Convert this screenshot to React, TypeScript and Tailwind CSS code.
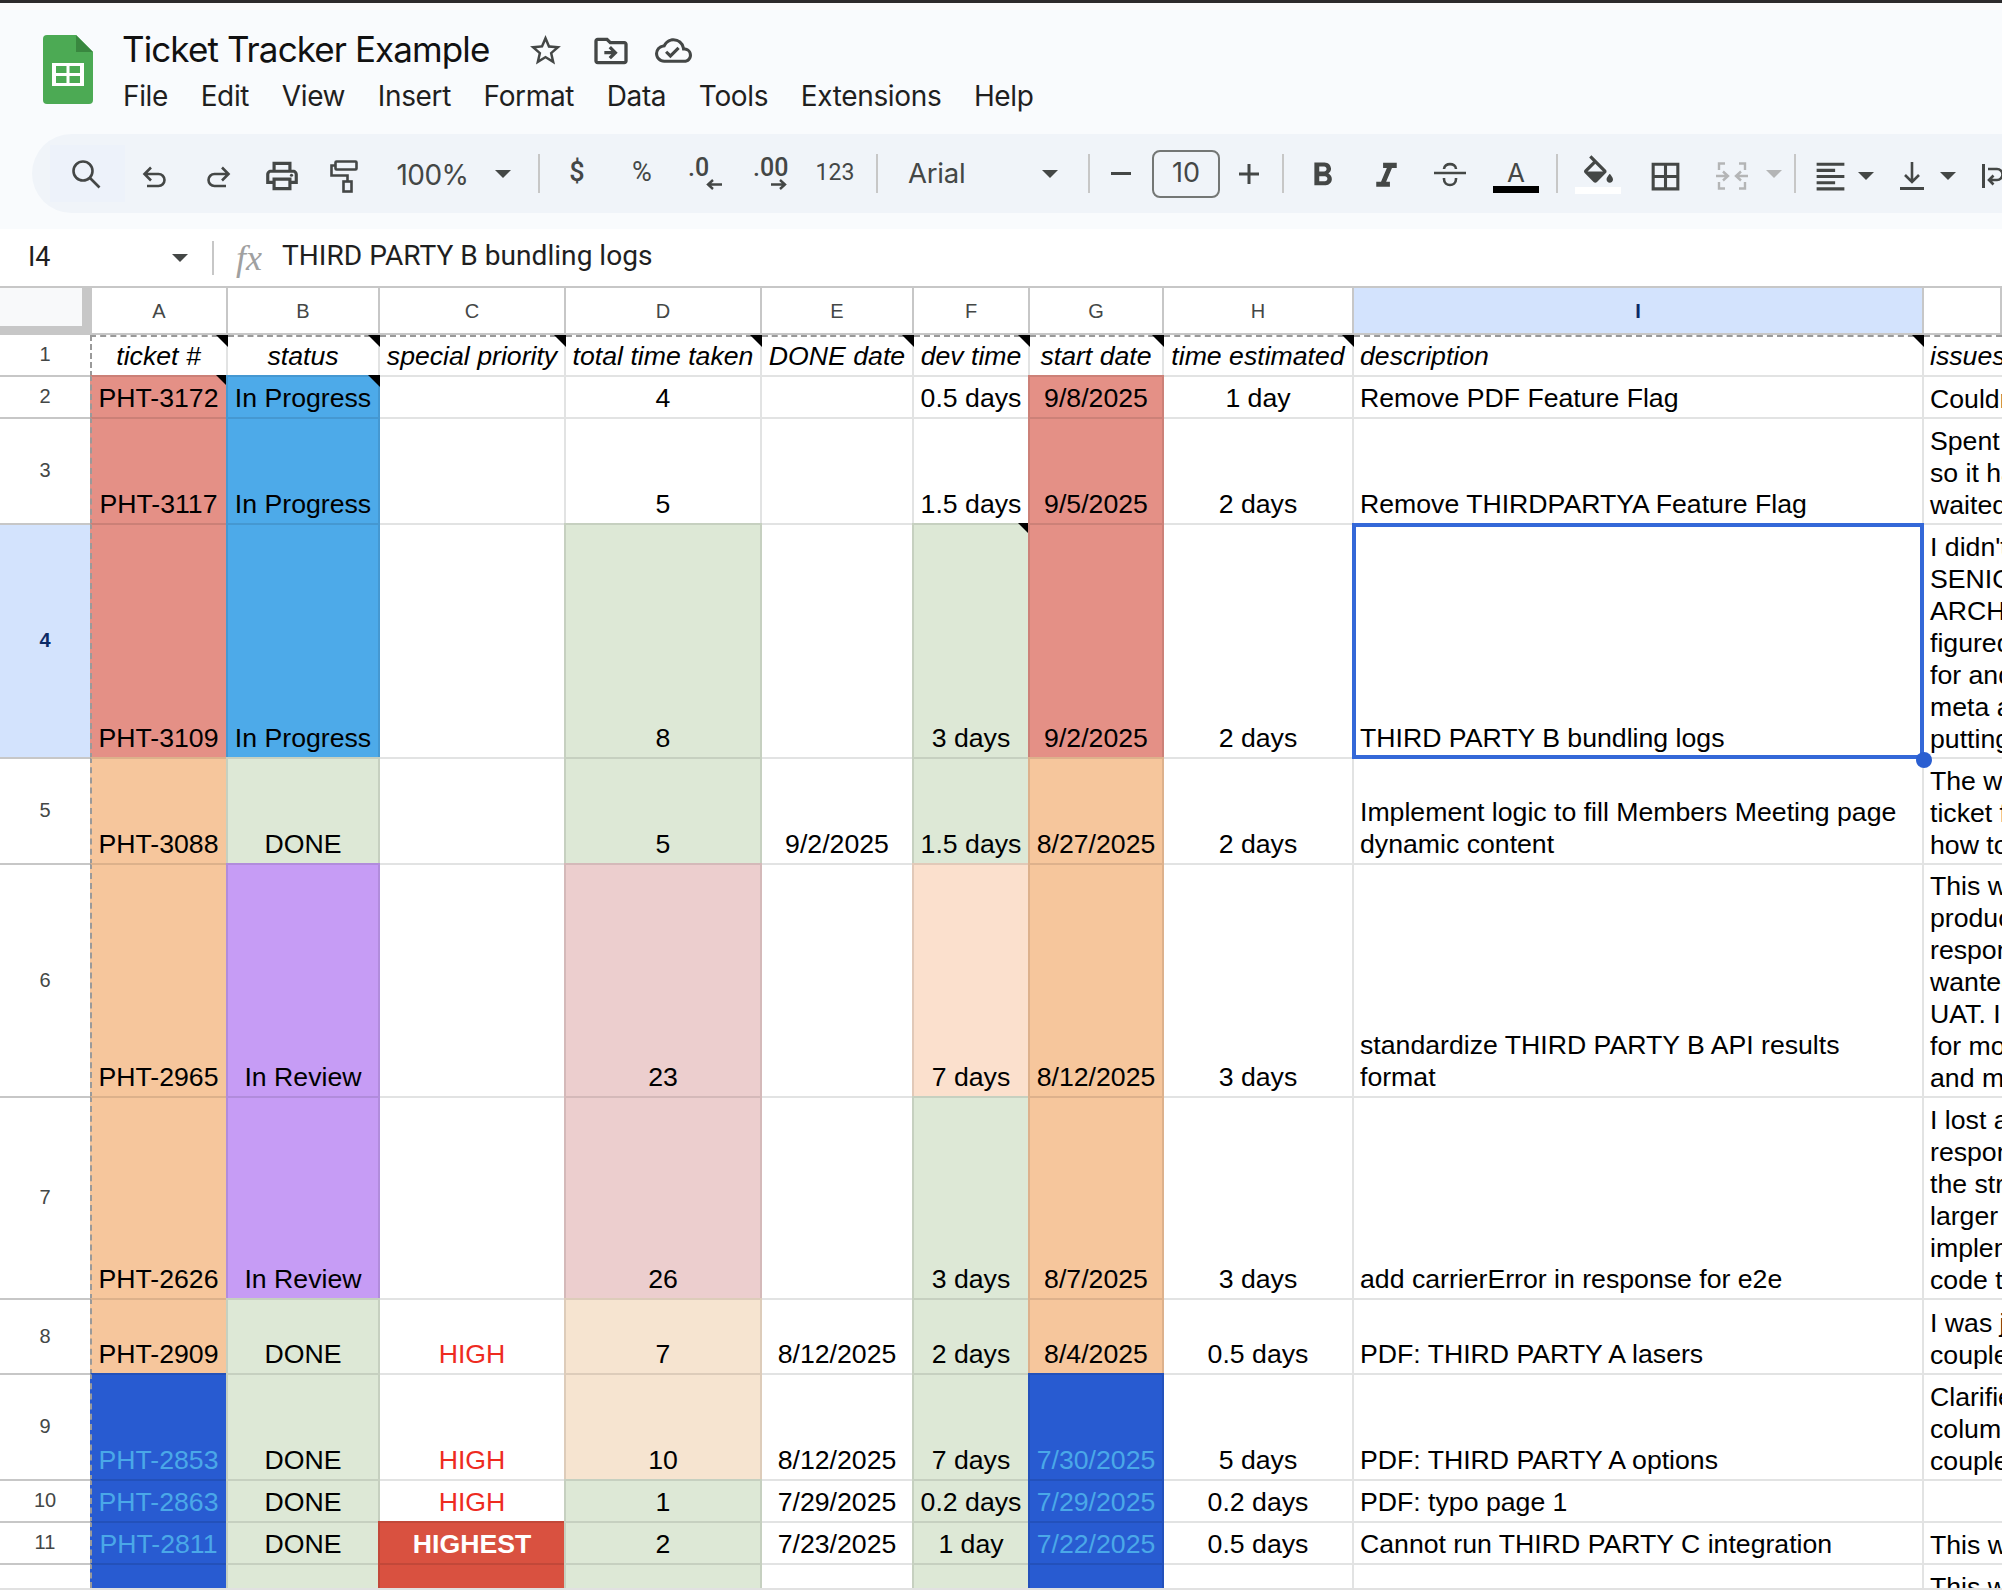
import React from "react";
import { MdStarBorder, MdOutlineDriveFileMove, MdOutlineCloudDone, MdOutlineLocalPrintshop, MdFormatBold, MdFormatItalic, MdBorderAll, MdFormatAlignLeft } from "react-icons/md";

const Sep = () => <div className="w-[2px] h-[39px] bg-[#c7c7c7] shrink-0" />;
const Tri = ({ gray }: { gray?: boolean }) => (
  <svg width="16" height="8" viewBox="0 0 16 8" className={gray ? "text-[#b4b5b6]" : "text-[#444746]"}>
    <path d="M0 0H16L8 8Z" fill="currentColor" />
  </svg>
);
const Slot = ({ w, children }: { w: string; children?: React.ReactNode }) => (
  <div className={`${w} shrink-0 flex items-center justify-center`}>{children}</div>
);

const Undo = ({ flip }: { flip?: boolean }) => (
  <svg width="25" height="22" viewBox="0 0 25 22" fill="none" stroke="#444746" strokeWidth="2.6" className={flip ? "-scale-x-100 mt-[6px]" : "mt-[6px]"}>
    <path d="M9 1.5L2.5 8L9 14.5M2.5 8H16.5A6 6 0 0 1 16.5 20H5" />
  </svg>
);

function Toolbar() {
  return (
    <div className="ml-[32px] mt-[10px] h-[79px] rounded-l-[40px] bg-[#f0f4f9] flex items-center pl-[18px] overflow-hidden text-[#444746] font-['Roboto',sans-serif]">
      <div className="w-[75px] h-[57px] shrink-0 bg-[#edf2fa] flex items-center justify-center pr-[4px]">
        <svg width="32" height="32" viewBox="0 0 32 32" fill="none" stroke="#444746" strokeWidth="2.6">
          <circle cx="13" cy="13" r="9.5" />
          <path d="M20 20L29.5 29.5" />
        </svg>
      </div>
      <Slot w="w-[58px]"><Undo /></Slot>
      <Slot w="w-[70px]"><Undo flip /></Slot>
      <Slot w="w-[58px]"><MdOutlineLocalPrintshop size={38} className="mt-[5px]" /></Slot>
      <Slot w="w-[66px]">
        <svg width="28" height="33" viewBox="0 0 28 33" fill="none" stroke="#444746" strokeWidth="2.6" className="mt-[6px]">
          <rect x="5.5" y="1.5" width="21" height="8" rx="1" />
          <path d="M5 5.5H1.5V15.5H17.5V21" />
          <rect x="13.5" y="21.5" width="8" height="10" />
        </svg>
      </Slot>
      <Slot w="w-[111px]"><span className="text-[28px] font-['Inter',sans-serif] tracking-[-0.5px] mt-[3px]">100%</span></Slot>
      <Slot w="w-[30px]"><Tri /></Slot>
      <div className="w-[20px] shrink-0" />
      <Sep />
      <Slot w="w-[74px]"><span className="text-[27px] font-medium -mt-[2px]">$</span></Slot>
      <Slot w="w-[56px]"><span className="text-[27px] -mt-[2px]">%</span></Slot>
      <Slot w="w-[70px]">
        <div className="flex flex-col items-end w-[34px] font-medium">
          <span className="text-[25px] leading-[20px] self-start">.0</span>
          <svg width="16" height="11" viewBox="0 0 16 11" fill="none" stroke="#444746" strokeWidth="2.4" className="mt-[1px]"><path d="M16 5.5H2M7 1L2 5.5L7 10" /></svg>
        </div>
      </Slot>
      <Slot w="w-[60px]">
        <div className="flex flex-col items-end w-[34px] font-medium">
          <span className="text-[25px] leading-[20px] self-start">.00</span>
          <svg width="16" height="11" viewBox="0 0 16 11" fill="none" stroke="#444746" strokeWidth="2.4" className="mt-[1px]"><path d="M0 5.5H14M9 1L14 5.5L9 10" /></svg>
        </div>
      </Slot>
      <Slot w="w-[70px]"><span className="text-[23px]">123</span></Slot>
      <div className="w-[6px] shrink-0" />
      <Sep />
      <div className="w-[162px] shrink-0 pl-[30px] text-[27.5px] font-['Inter',sans-serif] tracking-[-0.2px]">Arial</div>
      <Slot w="w-[20px]"><Tri /></Slot>
      <div className="w-[28px] shrink-0" />
      <Sep />
      <Slot w="w-[62px]"><div className="w-[20px] h-[3px] bg-[#444746]" /></Slot>
      <div className="w-[68px] h-[48px] shrink-0 border-2 border-[#747775] rounded-[8px] flex items-center justify-center text-[27px] font-['Inter',sans-serif]">10</div>
      <Slot w="w-[58px]">
        <svg width="20" height="20" viewBox="0 0 20 20" stroke="#444746" strokeWidth="3"><path d="M0 10H20M10 0V20" /></svg>
      </Slot>
      <div className="w-[4px] shrink-0" />
      <Sep />
      <Slot w="w-[76px]"><MdFormatBold size={39} className="mt-[4px]" /></Slot>
      <Slot w="w-[52px]"><MdFormatItalic size={41} className="mt-[5px]" /></Slot>
      <Slot w="w-[76px]">
        <svg width="32" height="26" viewBox="0 0 32 26" fill="none" stroke="#444746" strokeWidth="2.6" className="mt-[2px]">
          <path d="M0 11H32M10 7C10 0.5 22 0.5 22 7M10 16V17C10 25 22 25 22 17V16" />
        </svg>
      </Slot>
      <div className="w-[56px] shrink-0 flex flex-col items-center mt-[7px]">
        <span className="text-[26px] leading-[24px] font-['Inter',sans-serif]">A</span>
        <div className="w-[46px] h-[7px] bg-black mt-[1px]" />
      </div>
      <div className="w-[12px] shrink-0" />
      <Sep />
      <div className="w-[80px] shrink-0 flex flex-col items-center mt-[1px]">
        <svg width="29" height="28" viewBox="3 0 18 17" fill="#444746">
          <path d="M16.56 8.94L7.62 0 6.21 1.41l2.38 2.38-5.15 5.15c-.59.59-.59 1.54 0 2.12l5.5 5.5c.29.29.68.44 1.06.44s.77-.15 1.06-.44l5.5-5.5c.59-.58.59-1.53 0-2.12zM5.21 10L10 5.21 14.79 10H5.21zM19 11.5s-2 2.17-2 3.5c0 1.1.9 2 2 2s2-.9 2-2c0-1.33-2-3.5-2-3.5z" />
        </svg>
        <div className="w-[46px] h-[7px] bg-white mt-[4px]" />
      </div>
      <Slot w="w-[54px]"><MdBorderAll size={37} className="mt-[5px]" /></Slot>
      <div className="w-[8px] shrink-0" />
      <Slot w="w-[64px]">
        <svg width="32" height="28" viewBox="0 0 32 28" fill="none" stroke="#b4b5b6" strokeWidth="2.4" className="mt-[5px]">
          <path d="M3 8V1.5H9M3 20V26.5H9M29 8V1.5H23M29 20V26.5H23M0 14H11M7 9.5L12 14L7 18.5M32 14H21M25 9.5L20 14L25 18.5" />
        </svg>
      </Slot>
      <Slot w="w-[20px]"><Tri gray /></Slot>
      <div className="w-[10px] shrink-0" />
      <Sep />
      <div className="w-[8px] shrink-0" />
      <Slot w="w-[52px]"><MdFormatAlignLeft size={37} className="mt-[5px]" /></Slot>
      <Slot w="w-[20px]"><div className="mt-[5px]"><Tri /></div></Slot>
      <div className="w-[10px] shrink-0" />
      <Slot w="w-[52px]">
        <svg width="24" height="28" viewBox="0 0 24 28" fill="none" stroke="#444746" strokeWidth="2.6" className="mt-[5px]">
          <path d="M12 0V20M5 13L12 20L19 13" />
          <path d="M0 26.5H24" strokeWidth="3" />
        </svg>
      </Slot>
      <Slot w="w-[20px]"><div className="mt-[5px]"><Tri /></div></Slot>
      <div className="w-[24px] shrink-0" />
      <svg width="20" height="24" viewBox="0 0 20 24" fill="none" stroke="#444746" strokeWidth="2.6" className="shrink-0 mt-[4px]">
        <path d="M1.5 0V24" strokeWidth="3" />
        <path d="M6 5H15A5.5 5.5 0 0 1 15 16H7M11.5 11.5L7 16L11.5 20.5" />
      </svg>
    </div>
  );
}

const MENU = ["File", "Edit", "View", "Insert", "Format", "Data", "Tools", "Extensions", "Help"];

function Header() {
  return (
    <div className="h-[226px] bg-[#f9fbfd] shrink-0 font-['Roboto',sans-serif]">
      <div className="flex h-[121px] pt-[32px] pl-[43px]">
        <svg width="50" height="69" viewBox="0 0 50 69" className="shrink-0">
          <path d="M4 0H33L50 17V65A4 4 0 0 1 46 69H4A4 4 0 0 1 0 65V4A4 4 0 0 1 4 0Z" fill="#4caa54" />
          <path d="M33 0L50 17H33Z" fill="#39873f" />
          <path d="M9 28H41V51H9Z M13 31V38H23.5V31Z M26.5 31V38H37V31Z M13 41V48H23.5V41Z M26.5 41V48H37V41Z" fill="#fff" fillRule="evenodd" />
        </svg>
        <div className="ml-[29px] -mt-[7px]">
          <div className="flex items-center h-[42px]">
            <span className="text-[35px] text-[#111] font-['Inter',sans-serif] tracking-[-0.9px] leading-[42px]">Ticket Tracker Example</span>
            <div className="flex items-center ml-[38px] mt-[3px] text-[#444746]">
              <MdStarBorder size={37} />
              <MdOutlineDriveFileMove size={40} className="ml-[27px]" />
              <MdOutlineCloudDone size={37} className="ml-[24px]" />
            </div>
          </div>
          <div className="flex gap-[32.6px] ml-[1px] mt-[9px] text-[28px] leading-[34px] text-[#1f1f1f] font-['Inter',sans-serif] tracking-[-0.35px]">
            {MENU.map((m) => <span key={m}>{m}</span>)}
          </div>
        </div>
      </div>
      <Toolbar />
    </div>
  );
}

function FormulaBar() {
  return (
    <div className="h-[57px] bg-white shrink-0 flex items-center text-[#1f1f1f] font-['Roboto',sans-serif]">
      <div className="w-[212px] shrink-0 flex items-center pl-[28px] pr-[24px] justify-between text-[27px]">
        <span>I4</span>
        <Tri />
      </div>
      <div className="w-[2px] h-[34px] bg-[#c7c7c7] shrink-0" />
      <span className="ml-[22px] w-[46px] shrink-0 font-['Liberation_Serif',serif] italic text-[36px] leading-[40px] text-[#a0a0a0]">fx</span>
      <span className="text-[28.1px] -mt-[2px]">THIRD PARTY B bundling logs</span>
    </div>
  );
}

const RED = "bg-[#e49086]";
const BLUE = "bg-[#4daae9]";
const PEACH = "bg-[#f6c69c]";
const GREEN = "bg-[#dde8d6]";
const PURPLE = "bg-[#c69cf5]";
const PINK = "bg-[#eccece]";
const LPEACH = "bg-[#fbe0cd]";
const TAN = "bg-[#f6e4d0]";
const DARK = "bg-[#285bd1]";
const CRIT = "bg-[#d95140]";
const LINK = "text-[#4aa8e8]";

type R = {
  h: string; hh?: boolean;
  a: string; ac: string; b: string; bc: string; c?: string; d?: string; dc?: string; e?: string;
  f?: string; fc?: string; g?: string; gc: string; eh?: string; i?: string; j?: string[]; note?: boolean; fnote?: boolean;
};

const ROWS: R[] = [
  { h: "2", a: "PHT-3172", ac: RED, b: "In Progress", bc: BLUE, d: "4", f: "0.5 days", g: "9/8/2025", gc: RED, eh: "1 day", i: "Remove PDF Feature Flag", j: ["Couldn't"], note: true },
  { h: "3", a: "PHT-3117", ac: RED, b: "In Progress", bc: BLUE, d: "5", f: "1.5 days", g: "9/5/2025", gc: RED, eh: "2 days", i: "Remove THIRDPARTYA Feature Flag", j: ["Spent", "so it has", "waited"] },
  { h: "4", hh: true, a: "PHT-3109", ac: RED, b: "In Progress", bc: BLUE, d: "8", dc: GREEN, f: "3 days", fc: GREEN, g: "9/2/2025", gc: RED, eh: "2 days", i: "THIRD PARTY B bundling logs", j: ["I didn't", "SENIOR", "ARCHITECT", "figured", "for and", "meta and", "putting"], fnote: true },
  { h: "5", a: "PHT-3088", ac: PEACH, b: "DONE", bc: GREEN, d: "5", dc: GREEN, e: "9/2/2025", f: "1.5 days", fc: GREEN, g: "8/27/2025", gc: PEACH, eh: "2 days", i: "Implement logic to fill Members Meeting page dynamic content", j: ["The work", "ticket for", "how to"] },
  { h: "6", a: "PHT-2965", ac: PEACH, b: "In Review", bc: PURPLE, d: "23", dc: PINK, f: "7 days", fc: LPEACH, g: "8/12/2025", gc: PEACH, eh: "3 days", i: "standardize THIRD PARTY B API results format", j: ["This was", "product", "response", "wanted", "UAT. I", "for more", "and more"] },
  { h: "7", a: "PHT-2626", ac: PEACH, b: "In Review", bc: PURPLE, d: "26", dc: PINK, f: "3 days", fc: GREEN, g: "8/7/2025", gc: PEACH, eh: "3 days", i: "add carrierError in response for e2e", j: ["I lost a", "response", "the struct", "larger", "implement", "code to"] },
  { h: "8", a: "PHT-2909", ac: PEACH, b: "DONE", bc: GREEN, c: "HIGH", d: "7", dc: TAN, e: "8/12/2025", f: "2 days", fc: GREEN, g: "8/4/2025", gc: PEACH, eh: "0.5 days", i: "PDF: THIRD PARTY A lasers", j: ["I was just", "couple"] },
  { h: "9", a: "PHT-2853", ac: DARK, b: "DONE", bc: GREEN, c: "HIGH", d: "10", dc: TAN, e: "8/12/2025", f: "7 days", fc: GREEN, g: "7/30/2025", gc: DARK, eh: "5 days", i: "PDF: THIRD PARTY A options", j: ["Clarified", "column", "couple"] },
  { h: "10", a: "PHT-2863", ac: DARK, b: "DONE", bc: GREEN, c: "HIGH", d: "1", dc: GREEN, e: "7/29/2025", f: "0.2 days", fc: GREEN, g: "7/29/2025", gc: DARK, eh: "0.2 days", i: "PDF: typo page 1" },
  { h: "11", a: "PHT-2811", ac: DARK, b: "DONE", bc: GREEN, c: "HIGHEST", d: "2", dc: GREEN, e: "7/23/2025", f: "1 day", fc: GREEN, g: "7/22/2025", gc: DARK, eh: "0.5 days", i: "Cannot run THIRD PARTY C integration", j: ["This was"] },
  { h: "", a: "", ac: DARK, b: "", bc: GREEN, c: "CRIT", d: "", dc: GREEN, f: "", fc: GREEN, g: "", gc: DARK, eh: "", i: "", j: ["This was"] },
];

const Note = () => <div className="absolute -top-[2px] -right-[2px] w-[12px] h-[12px] bg-black [clip-path:polygon(0_0,100%_0,100%_100%)]" />;

function Cell({ bg, text, note, left, extra, children }: { bg?: string; text?: string; note?: boolean; left?: boolean; extra?: string; children?: React.ReactNode }) {
  const skin = bg
    ? `${bg} -ml-[2px] -mt-[2px] border-l-2 border-t-2 border-r-2 border-b-2 border-black/10`
    : "bg-white border-r-2 border-b-2 border-[#e2e3e3]";
  return (
    <div className={`relative flex items-end pb-[3px] ${left ? "justify-start pl-[6px]" : "justify-center text-center"} ${skin} ${text ?? "text-black"} ${extra ?? ""}`}>
      {note && <Note />}
      <div>{children}</div>
    </div>
  );
}

const DASH_A = "border-l-[#9a9a9a] [border-left-style:dashed] pr-[1px]";

const HEAD = ["A", "B", "C", "D", "E", "F", "G", "H", "I"];
const TITLES = ["ticket #", "status", "special priority", "total time taken", "DONE date", "dev time", "start date", "time estimated"];

function Sheet() {
  return (
    <div className="h-[1302px] shrink-0 overflow-hidden border-t-2 border-[#c7c7c7] bg-white font-['Liberation_Sans',Arial,sans-serif] text-[26.67px] leading-[32px]">
      <div className="grid grid-cols-[92px_136px_152px_186px_196px_152px_116px_134px_190px_570px_78px] grid-rows-[47px_42px_42px_106px_234px_106px_233px_202px_75px_106px_42px_42px_42px]">
        <div className="bg-[#f8f9fa] border-r-[10px] border-b-[9px] border-[#c7c7c7]" />
        {HEAD.map((c) => (
          <div key={c} className={`flex items-center justify-center text-[20px] leading-none border-r-2 border-b-2 border-[#c7c7c7] ${c === "I" ? "bg-[#d3e3fd] text-[#0b2a66] font-bold" : "bg-white text-[#444746]"}`}>{c}</div>
        ))}
        <div className="bg-white border-r-2 border-b-2 border-[#c7c7c7]" />

        <div className="bg-white border-b-2 border-[#c7c7c7] flex items-center justify-center pr-[2px] pb-[2px] text-[20px] leading-none text-[#444746]">1</div>
        {TITLES.map((t, i) => (
          <div key={t} className={`relative flex items-end justify-center pb-[3px] italic whitespace-nowrap text-black bg-white border-r-2 border-b-2 border-t-2 border-[#e2e3e3] border-t-[#9a9a9a] [border-top-style:dashed] ${i === 0 ? `-ml-[2px] border-l-2 ${DASH_A}` : ""}`}>
            <Note />
            <span>{t}</span>
          </div>
        ))}
        <div className="relative flex items-end pb-[3px] pl-[6px] italic text-black bg-white border-r-2 border-b-2 border-t-2 border-[#e2e3e3] border-t-[#9a9a9a] [border-top-style:dashed]">
          <Note />
          <span>description</span>
        </div>
        <div className="flex items-end pb-[3px] pl-[6px] italic text-black bg-white border-b-2 border-t-2 border-[#e2e3e3] border-t-[#9a9a9a] [border-top-style:dashed] overflow-hidden whitespace-nowrap">
          <span>issues faced</span>
        </div>

        {ROWS.map((r, idx) => (
          <React.Fragment key={idx}>
            <div className={`border-b-2 border-[#c7c7c7] flex items-center justify-center pr-[2px] pb-[2px] text-[20px] leading-none ${r.hh ? "bg-[#d3e3fd] text-[#0b2a66] font-bold" : "bg-white text-[#444746]"}`}>{r.h}</div>
            <Cell bg={r.ac} text={r.ac === DARK ? LINK : undefined} note={r.note} extra={DASH_A}>{r.a}</Cell>
            <Cell bg={r.bc} note={r.note}>{r.b}</Cell>
            {r.c === "HIGHEST" || r.c === "CRIT" ? (
              <Cell bg={CRIT} text="text-white font-bold">{r.c === "HIGHEST" ? r.c : ""}</Cell>
            ) : (
              <Cell text="text-[#ee2b1f]">{r.c}</Cell>
            )}
            <Cell bg={r.dc}>{r.d}</Cell>
            <Cell>{r.e}</Cell>
            <Cell bg={r.fc} note={r.fnote}><span className="whitespace-nowrap">{r.f}</span></Cell>
            <Cell bg={r.gc} text={r.gc === DARK ? LINK : undefined}><span className="whitespace-nowrap">{r.g}</span></Cell>
            <Cell>{r.eh}</Cell>
            {r.h === "4" ? (
              <div className="relative -ml-[2px] -mt-[2px] border-[4px] border-[#3468d8] bg-white z-10 flex items-end pl-[4px] pb-[1px] text-black">
                <div>{r.i}</div>
                <div className="absolute -right-[12px] -bottom-[13px] w-[16px] h-[16px] rounded-full bg-[#2b5fd1]" />
              </div>
            ) : (
              <Cell left>{r.i}</Cell>
            )}
            <div className="flex flex-col justify-end pb-[2px] pl-[6px] border-b-2 border-[#e2e3e3] overflow-hidden whitespace-nowrap text-black bg-white">
              {(r.j ?? []).map((l, i) => <div key={i}>{l}</div>)}
            </div>
          </React.Fragment>
        ))}
      </div>
    </div>
  );
}

export default function App() {
  return (
    <div className="w-[2002px] h-[1590px] overflow-hidden flex flex-col bg-white">
      <div className="h-[3px] bg-[#2b2b2d] shrink-0" />
      <Header />
      <FormulaBar />
      <Sheet />
      <div className="h-[2px] bg-[#e1e1e1] shrink-0" />
    </div>
  );
}
